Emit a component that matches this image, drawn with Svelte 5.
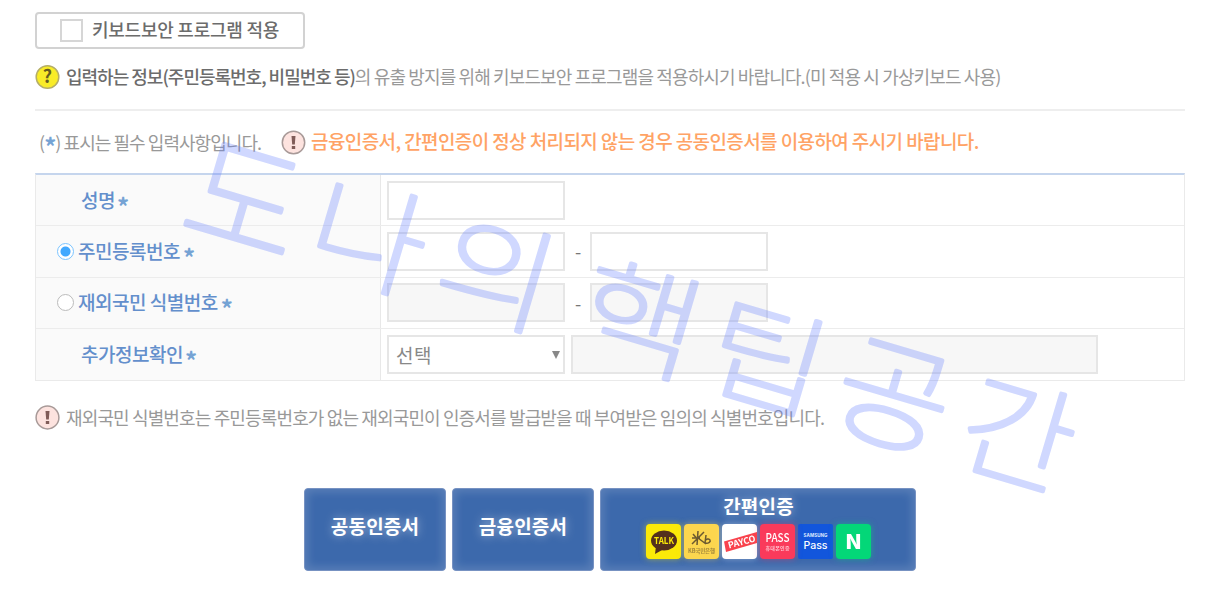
<script lang="ts">
  type Glyph = { char: string; x: number; y: number; sx: number; sy: number };

  const watermark: Glyph[] = [
    { char: '도', x: 246, y: 197, sx: 1.12, sy: 1.16 },
    { char: '나', x: 370, y: 234, sx: 1.13, sy: 1.03 },
    { char: '의', x: 498, y: 271, sx: 1.15, sy: 1.02 },
    { char: '핵', x: 641, y: 317, sx: 1.17, sy: 1.03 },
    { char: '팁', x: 768, y: 356, sx: 1.16, sy: 1 },
    { char: '공', x: 895, y: 393, sx: 1.12, sy: 1.07 },
    { char: '간', x: 1019, y: 432, sx: 1.1, sy: 1.03 }
  ];

  let security = false;
  let idType = 'resident';
  let extra = '';
</script>

<main class="page">
  <label class="security">
    <input class="check" type="checkbox" bind:checked={security} />
    <span>키보드보안 프로그램 적용</span>
  </label>

  <p class="info">
    <svg class="mark" viewBox="0 0 26 26">
      <circle cx="12.5" cy="13" r="11.3" fill="#f9ec28" stroke="#b5ae68" stroke-width="1.5" />
      <text x="12.5" y="19" text-anchor="middle" font-size="18" font-weight="700" fill="#665b20">?</text>
    </svg>
    <span class="info-text"><b>입력하는 정보(주민등록번호, 비밀번호 등)</b>의 유출 방지를 위해 키보드보안 프로그램을 적용하시기 바랍니다.(미 적용 시 가상키보드 사용)</span>
  </p>

  <div class="notice">
    <span class="required">(<i class="star">*</i>) 표시는 필수 입력사항입니다.</span>
    <svg class="mark" viewBox="0 0 26 26">
      <circle cx="12.5" cy="13.5" r="11.2" fill="#fde3df" stroke="#a89a98" stroke-width="1.5" />
      <path d="M10.5 7h4l-.7 8.5h-2.6z" fill="#805c58" />
      <rect x="10.8" y="17" width="3.4" height="3" fill="#805c58" />
    </svg>
    <strong>금융인증서, 간편인증이 정상 처리되지 않는 경우 공동인증서를 이용하여 주시기 바랍니다.</strong>
  </div>

  <div class="form">
    <div class="row">
      <div class="label indent">성명<i class="star">*</i></div>
      <div class="field"><input class="box" type="text" /></div>
    </div>
    <div class="row">
      <label class="label">
        <input class="radio" type="radio" value="resident" bind:group={idType} />주민등록번호<i class="star gap">*</i>
      </label>
      <div class="field">
        <input class="box" type="text" /><span class="dash">-</span><input class="box" type="text" />
      </div>
    </div>
    <div class="row">
      <label class="label">
        <input class="radio" type="radio" value="overseas" bind:group={idType} />재외국민 식별번호<i class="star gap">*</i>
      </label>
      <div class="field">
        <input class="box" type="text" disabled /><span class="dash">-</span><input class="box" type="text" disabled />
      </div>
    </div>
    <div class="row">
      <div class="label indent">추가정보확인<i class="star">*</i></div>
      <div class="field">
        <button class="box select" type="button">
          <span>선택</span>
          <svg width="8" height="8" viewBox="0 0 8 8"><path d="M0 0h8L4 8z" fill="#888" /></svg>
        </button>
        <input class="box wide" type="text" bind:value={extra} disabled />
      </div>
    </div>
  </div>

  <p class="note">
    <svg class="mark" viewBox="0 0 26 26">
      <circle cx="12.5" cy="13.5" r="11.4" fill="#fde3df" stroke="#a89a98" stroke-width="1.5" />
      <path d="M10.5 7h4l-.7 8.5h-2.6z" fill="#805c58" />
      <rect x="10.8" y="17" width="3.4" height="3" fill="#805c58" />
    </svg>
    <span>재외국민 식별번호는 주민등록번호가 없는 재외국민이 인증서를 발급받을 때 부여받은 임의의 식별번호입니다.</span>
  </p>

  <div class="actions">
    <button class="cert" type="button">공동인증서</button>
    <button class="cert" type="button">금융인증서</button>
    <button class="cert simple" type="button">
      <span>간편인증</span>
      <span class="brands">
        <svg class="kakao" viewBox="0 0 35 35">
          <rect width="35" height="35" rx="4" fill="#fbea08" />
          <ellipse cx="18" cy="16.5" rx="13" ry="10" fill="#54301d" />
          <path d="M10 22l-1 8 8-4.5z" fill="#54301d" />
          <text x="18" y="20" text-anchor="middle" font-size="9.5" font-weight="700" textLength="20" lengthAdjust="spacingAndGlyphs" fill="#fbea08">TALK</text>
        </svg>
        <svg class="kb" viewBox="0 0 35 35">
          <rect width="35" height="35" rx="4" fill="#fcd64e" />
          <path d="M14 7l-1 14M9 10l3 3.5M20 8L8 20M8 14h8M14 14l8 6M22 11l-1 8c3 1 6-1 5-3s-4-1-5 1" fill="none" stroke="#6b5930" stroke-width="1.5" />
          <text x="17.5" y="29" text-anchor="middle" font-size="5.5" font-weight="700" textLength="27" fill="#a2873b">KB국민은행</text>
        </svg>
        <svg class="payco" viewBox="0 0 35 35">
          <rect width="35" height="35" rx="4" fill="#fff" />
          <path d="M2 17.5L35 8v11L4 28z" fill="#f9434d" />
          <text transform="translate(7 24.5) rotate(-15)" font-size="8.8" font-weight="700" textLength="28" fill="#fff">PAYCO</text>
        </svg>
        <svg class="pass" viewBox="0 0 35 35">
          <rect width="35" height="35" rx="4" fill="#fa3a5b" />
          <text x="17.5" y="18" text-anchor="middle" font-size="12" font-weight="500" textLength="24" lengthAdjust="spacingAndGlyphs" fill="#fff">PASS</text>
          <text x="17.5" y="26" text-anchor="middle" font-size="5" textLength="24" fill="#ffc0cd">휴대폰인증</text>
        </svg>
        <svg class="samsung" viewBox="0 0 35 35">
          <rect width="35" height="35" rx="2" fill="#1256dc" />
          <text class="latin" x="17.5" y="13" text-anchor="middle" font-size="4.5" font-weight="700" textLength="24" fill="#dce8ff">SAMSUNG</text>
          <text class="latin" x="17.5" y="24.5" text-anchor="middle" font-size="9.8" font-weight="500" textLength="24" lengthAdjust="spacingAndGlyphs" fill="#fff">Pass</text>
        </svg>
        <svg class="naver" viewBox="0 0 35 35">
          <rect width="35" height="35" rx="4" fill="#03d778" />
          <text class="heavy" x="17.5" y="25" text-anchor="middle" font-size="20" textLength="17" lengthAdjust="spacingAndGlyphs" fill="#fff">N</text>
        </svg>
      </span>
    </button>
  </div>

  <svg class="watermark" width="1224" height="600" viewBox="0 0 1224 600">
    <g opacity="0.3">
      {#each watermark as g}
        <text transform="translate({g.x} {g.y}) rotate(16.5) scale({g.sx} {g.sy})" y="44" text-anchor="middle">{g.char}</text>
      {/each}
    </g>
  </svg>
</main>

<style>
  :global(body) {
    background: #fff;
  }

  .page {
    position: relative;
    box-sizing: border-box;
    width: 1224px;
    height: 600px;
    padding: 12px 39px 0 35px;
    overflow: hidden;
    color: #999;
    font-family: 'Noto Sans CJK KR', sans-serif;
    font-size: 18px;
    line-height: 26px;
    letter-spacing: -1px;
  }

  p {
    margin: 0;
  }

  .security {
    display: flex;
    align-items: center;
    box-sizing: border-box;
    width: 270px;
    height: 37px;
    padding: 0 0 3px 22px;
    border: 2px solid #d2d2d2;
    border-radius: 4px;
    color: #6c6c6c;
    font-weight: 500;
    letter-spacing: -0.25px;
  }

  .check {
    appearance: none;
    box-sizing: border-box;
    width: 23px;
    height: 23px;
    margin: 3px 9px 0 1px;
    border: 2px solid #d6d6d6;
  }

  .mark {
    flex: none;
    width: 26px;
    height: 26px;
    overflow: visible;
    letter-spacing: 0;
    line-height: 1;
  }

  .info,
  .notice,
  .note {
    display: flex;
    align-items: center;
    white-space: nowrap;
  }

  .info {
    align-items: flex-start;
    gap: 5px;
    box-sizing: border-box;
    height: 62px;
    padding-top: 15px;
    border-bottom: 2px solid #eee;
  }

  .info-text {
    margin-top: -1px;
    letter-spacing: -0.87px;
  }

  .info b {
    color: #6c6c6c;
    font-weight: 500;
    letter-spacing: -1px;
  }

  .notice {
    height: 62px;
    padding-left: 4px;
  }

  .required {
    width: 242px;
    letter-spacing: -0.95px;
  }

  .notice strong {
    margin: -2px 0 0 4px;
    color: #ffa365;
    font-size: 19px;
    font-weight: 500;
    letter-spacing: -0.6px;
  }

  .star {
    color: #75a3d4;
    font-size: 24px;
    font-style: normal;
    font-weight: 700;
    line-height: 18px;
    vertical-align: -6px;
  }

  .form {
    border: 1px solid #eaeaea;
    border-top: 2px solid #c5d5ed;
  }

  .row {
    display: flex;
    box-sizing: border-box;
    height: 51.3px;
    border-bottom: 1px solid #ececec;
  }

  .row:last-child {
    border-bottom: 0;
  }

  .label {
    display: flex;
    align-items: center;
    box-sizing: border-box;
    width: 345px;
    padding: 0 0 1px 21px;
    border-right: 1px solid #e8e8e8;
    background: #fafafa;
    color: #638fcc;
    font-size: 19px;
    font-weight: 500;
    letter-spacing: -0.5px;
  }

  .label.indent {
    padding-left: 45px;
  }

  .label .star {
    margin: 12px 0 0 2px;
  }

  .label .star.gap {
    margin-left: 3px;
  }

  .radio {
    appearance: none;
    box-sizing: border-box;
    width: 17px;
    height: 17px;
    margin: 1px 4px 0 0;
    border: 1.5px solid #bbb;
    border-radius: 50%;
    background: #fff;
  }

  .radio:checked {
    border-color: #7cc4ff;
    background: radial-gradient(circle, #42a9ff 4.5px, #fff 5.5px);
  }

  .field {
    display: flex;
    align-items: center;
    padding-left: 6px;
  }

  .box {
    box-sizing: border-box;
    width: 178px;
    height: 39px;
    padding: 0 8px;
    border: 2px solid #e6e6e6;
    border-radius: 0;
    background: #fff;
  }

  .box:disabled {
    background: #f7f7f7;
  }

  .select {
    display: flex;
    align-items: center;
    justify-content: space-between;
    padding: 0 3px 0 7px;
    color: #888;
    font: 19px 'Noto Sans CJK KR', sans-serif;
    letter-spacing: 0.5px;
  }

  .wide {
    width: 527px;
    margin-left: 6px;
  }

  .dash {
    width: 25px;
    text-align: center;
    color: #777;
  }

  .note {
    gap: 5px;
    margin-top: 23px;
    letter-spacing: -0.86px;
  }

  .note span {
    margin-top: -1px;
  }

  .actions {
    display: flex;
    gap: 6px;
    margin: 58px 0 0 269px;
  }

  .cert {
    width: 142px;
    height: 83px;
    padding: 0 0 8px;
    border: 1px solid #7792c2;
    border-radius: 4px;
    background: #3c69ac;
    box-shadow: inset 0 0 8px 3px #5a7fb8;
    color: #fff;
    font-family: inherit;
    font-size: 19px;
    font-weight: 700;
    letter-spacing: 0.2px;
    text-shadow: 0 0 10px rgba(255, 255, 255, 0.5);
  }

  .simple {
    display: flex;
    flex-direction: column;
    align-items: center;
    width: 316px;
    padding: 4px 0 0 1px;
    line-height: 26px;
  }

  .brands {
    display: flex;
    gap: 3.2px;
    margin-top: 5px;
    letter-spacing: 0;
    line-height: 1;
  }

  .brands svg {
    width: 35px;
    height: 35px;
    text-shadow: none;
  }

  .brands .kakao {
    filter: drop-shadow(0 0 3px rgba(251, 234, 8, 0.5));
  }

  .brands .kb {
    filter: drop-shadow(0 0 3px rgba(252, 214, 78, 0.5));
  }

  .brands .payco {
    filter: drop-shadow(0 0 3px rgba(255, 255, 255, 0.4));
  }

  .brands .pass {
    filter: drop-shadow(0 0 3px rgba(250, 58, 91, 0.5));
  }

  .brands .naver {
    filter: drop-shadow(0 0 3px rgba(3, 215, 120, 0.5));
  }

  .latin {
    font-family: Inter, sans-serif;
  }

  .heavy {
    font-weight: 900;
  }

  .watermark {
    position: absolute;
    top: 0;
    left: 0;
    pointer-events: none;
  }

  .watermark text {
    fill: #627dff;
    stroke: #627dff;
    stroke-width: 3.8;
    stroke-linejoin: round;
    font-size: 112px;
    font-weight: 100;
    letter-spacing: 0;
  }
</style>
